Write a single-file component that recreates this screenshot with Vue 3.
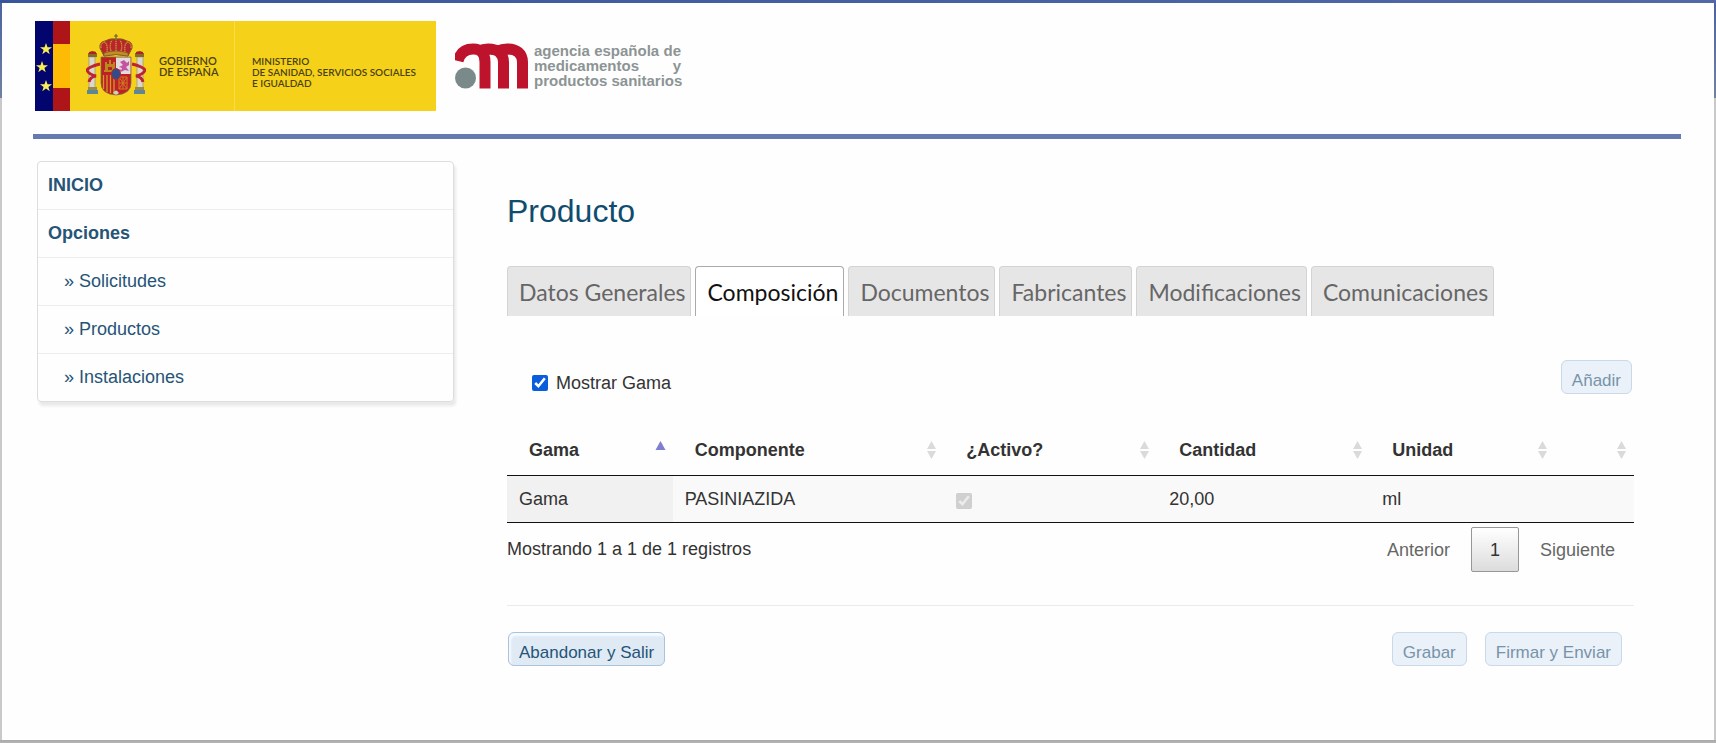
<script setup>
import { ref } from 'vue'

const tabs = ['Datos Generales', 'Composición', 'Documentos', 'Fabricantes', 'Modificaciones', 'Comunicaciones']
const activeTab = ref('Composición')
const showRange = ref(true)
const options = ['Solicitudes', 'Productos', 'Instalaciones']
const columns = [
  { key: 'gama', label: 'Gama', sorted: true },
  { key: 'componente', label: 'Componente' },
  { key: 'activo', label: '¿Activo?' },
  { key: 'cantidad', label: 'Cantidad' },
  { key: 'unidad', label: 'Unidad' },
  { key: 'acciones', label: '' },
]
const rows = [{ gama: 'Gama', componente: 'PASINIAZIDA', activo: true, cantidad: '20,00', unidad: 'ml' }]
</script>

<template>
  <div class="frame">
    <div class="page">
      <header class="header">
        <div class="gov">
          <svg class="flags" width="35" height="90" viewBox="0 0 35 90" aria-hidden="true">
            <rect width="18" height="90" fill="#03056f" />
            <rect x="18" width="17" height="90" fill="#ae1518" />
            <rect x="18" y="23" width="17" height="44" fill="#fdbb05" />
            <defs>
              <path id="star" d="M0-6 1.5-1.8 6-1.8 2.4.9 3.7 5.2 0 2.6-3.7 5.2-2.4.9-6-1.8-1.5-1.8Z" fill="#f8ee55" />
            </defs>
            <use href="#star" x="11" y="28" />
            <use href="#star" x="7" y="46" />
            <use href="#star" x="11" y="65" />
          </svg>
          <svg class="arms" width="60" height="62" viewBox="0 0 60 62" aria-hidden="true">
            <g>
              <path d="M3 23h6v31H3zM51 23h6v31h-6z" fill="#d9d8cf" stroke="#8d8b74" stroke-width=".6" />
              <path d="M2 19h9v4H2zM49 19h9v4h-9z" fill="#8b6a24" />
              <path d="M3 18l3.500-1 3.500 1v2H3zM50 18l3.500-1 3.500 1v2h-7z" fill="#ab2527" />
              <path d="M2 53h9v3H2zM49 53h9v3h-9z" fill="#9a8a49" />
              <path d="M1 56h11v4H1zM48 56h11v4H48z" fill="#5d8697" />
              <path d="M14 30Q9 31 5 33T1 36q1 4 9 6-6 1-7 6M46 30q5 1 9 3t4 3q-1 4-9 6 6 1 7 6" fill="none" stroke="#bd2630" stroke-width="3" />
            </g>
            <path d="M15 23h30v26q0 11-15 12Q15 60 15 49Z" fill="#bd2027" stroke="#80733c" stroke-width=".8" />
            <path d="M30 23.500h14.500V40H30z" fill="#e2dbdf" />
            <path d="M19 36v-8h2v2h2v-4h2v4h2v-2h2v8h-3v-3h-4v3zM18 36h11v2H18z" fill="#b98a1b" />
            <path d="M34 28l4-2 3 3 2-2v4l-3 2 3 4-4-1-4 2 1-4-3-1 4-2zM33 35l3 1-2 2z" fill="#c653a0" />
            <path d="M17.500 41v14M21 41v17M24.500 41v18M28 41v19" stroke="#d39a21" stroke-width="1.300" />
            <path d="M33 43h8v12h-8zM33 43l8 12M41 43l-8 12M37 43v12M33 49h8" fill="none" stroke="#d37a20" stroke-width="1" />
            <path d="M27 59q3-5 6 0l-3 2z" fill="#c9d2c5" />
            <ellipse cx="30" cy="40" rx="4.500" ry="5.500" fill="#344b87" stroke="#ab2b3c" />
            <path d="M18 22 14 14q-1-6 5-7 5-3 11-2 6-1 11 2 6 1 5 7l-4 8q-12-3-24 0Z" fill="#b8262b" stroke="#7d5b1c" />
            <path d="M18 19q12-4 24 0v3q-12-3-24 0Z" fill="#c28c27" stroke="#765a2b" stroke-width=".6" />
            <path d="M15 14q-1-5 4-6 3 3 2 10M45 14q1-5-4-6-3 3-2 10M25 17q-2-6 1-11M35 17q2-6-1-11M30 17V5" fill="none" stroke="#cf9e39" stroke-width="1.200" stroke-dasharray="1.500 .7" />
            <path d="M30 0v6M28 2h4" stroke="#6b6424" stroke-width="1.200" />
          </svg>
          <p class="gov-name">GOBIERNO<br />DE ESPAÑA</p>
          <p class="ministry">MINISTERIO<br />DE SANIDAD, SERVICIOS SOCIALES<br />E IGUALDAD</p>
        </div>
        <div class="agency">
          <svg width="73" height="46" viewBox="0 0 73 46" aria-hidden="true">
            <path d="M3 18Q6 6 18 6q12 0 12 13v26.500M24 8q4-2 9-2 15 0 15.500 13v26.500M43 8q4-2 9-2 15 0 15.500 13v26.500" fill="none" stroke="#be132c" stroke-width="11" />
            <circle cx="10.500" cy="35" r="10.500" fill="#7a8a8a" />
          </svg>
          <div class="agency-name">
            <span>agencia española de</span>
            <span>medicamentos y</span>
            <span>productos sanitarios</span>
          </div>
        </div>
      </header>

      <div class="body">
        <nav class="menu">
          <a href="#" class="strong">INICIO</a>
          <a href="#" class="strong">Opciones</a>
          <a v-for="o in options" :key="o" href="#" class="sub">» {{ o }}</a>
        </nav>

        <main class="main">
          <h1>Producto</h1>
          <div class="tabs" role="tablist">
            <button
              v-for="t in tabs"
              :key="t"
              type="button"
              role="tab"
              class="tab"
              :class="{ active: t === activeTab }"
              :aria-selected="t === activeTab"
              @click="activeTab = t"
            >{{ t }}</button>
          </div>

          <div class="tools">
            <label class="check"><input v-model="showRange" type="checkbox" />Mostrar Gama</label>
            <button type="button" class="btn" disabled>Añadir</button>
          </div>

          <table class="grid">
            <colgroup>
              <col class="c1" /><col class="c2" /><col class="c3" /><col class="c3" /><col class="c5" /><col class="c6" />
            </colgroup>
            <thead>
              <tr>
                <th v-for="c in columns" :key="c.key" scope="col">
                  <div class="th">
                    <span>{{ c.label }}</span>
                    <svg width="11" height="20" viewBox="0 0 11 20" aria-hidden="true">
                      <path v-if="c.sorted" d="M5.500 1 10.500 10H.5Z" fill="#7f7fd0" />
                      <path v-else d="M5.500 1 10 9H1ZM1 11h9l-4.500 8Z" fill="#dadada" />
                    </svg>
                  </div>
                </th>
              </tr>
            </thead>
            <tbody>
              <tr v-for="r in rows" :key="r.componente">
                <td class="sorted">{{ r.gama }}</td>
                <td>{{ r.componente }}</td>
                <td><input type="checkbox" :checked="r.activo" disabled aria-label="¿Activo?" /></td>
                <td>{{ r.cantidad }}</td>
                <td>{{ r.unidad }}</td>
                <td></td>
              </tr>
            </tbody>
          </table>

          <div class="foot">
            <span>Mostrando 1 a 1 de 1 registros</span>
            <div class="pager">
              <button type="button" disabled>Anterior</button>
              <button type="button" class="current">1</button>
              <button type="button" disabled>Siguiente</button>
            </div>
          </div>

          <div class="actions">
            <button type="button" class="btn">Abandonar y Salir</button>
            <div class="right">
              <button type="button" class="btn" disabled>Grabar</button>
              <button type="button" class="btn" disabled>Firmar y Enviar</button>
            </div>
          </div>
        </main>
      </div>
    </div>
  </div>
</template>

<style>
body {
  margin: 0;
}
</style>

<style scoped>
* {
  box-sizing: border-box;
}
.frame {
  display: flex;
  min-height: 100vh;
  padding: 3px 2px;
  background:
    linear-gradient(90deg, #38559c, #5269a6) top / 100% 3px no-repeat,
    linear-gradient(#4a61a3, #71829f) top / 100% 98px no-repeat,
    linear-gradient(#a9a9a9, #b5b5b5) bottom / 100% 3px no-repeat,
    #c9c9c9;
  font: 18px/24px "Liberation Sans", Arial, sans-serif;
  color: #333;
}
.page {
  flex: 1;
  padding: 18px 33px 40px 31px;
  background: #fefefe;
}
.header {
  display: flex;
  gap: 19px;
  padding: 0 2px 23px;
  border-bottom: 5px solid #657bb0;
}
.gov {
  display: flex;
  align-items: center;
  width: 401px;
  height: 90px;
  background: #f6d11a;
  color: #4b4212;
  font: 600 11px/11px Lato, sans-serif;
}
.gov p {
  margin: 0;
}
.arms {
  margin: 0 13px 2px 16px;
}
.gov-name {
  width: 75px;
}
.ministry {
  display: flex;
  align-items: center;
  align-self: stretch;
  padding: 12px 0 0 17px;
  border-left: 1px solid #f9dc4a;
  font-size: 10px;
  white-space: nowrap;
}
.agency {
  display: flex;
  gap: 6px;
  padding-top: 22px;
}
.agency-name {
  display: flex;
  flex-direction: column;
  width: 147px;
  color: #8c9494;
  font: bold 15px/15px "Liberation Sans", Arial, sans-serif;
}
.agency-name span {
  text-align-last: justify;
  white-space: nowrap;
}
.body {
  display: flex;
  align-items: flex-start;
  gap: 53px;
  padding: 22px 47px 0 4px;
}
.menu {
  display: flex;
  flex: none;
  flex-direction: column;
  width: 417px;
  border: 1px solid #ddd;
  border-radius: 4px;
  box-shadow: 2px 4px 3px #e9e9e9;
}
.menu a {
  padding: 11px 10px 12px;
  border-top: 1px solid #ededed;
  color: #265477;
  text-decoration: none;
}
.menu a:first-child {
  border-top: 0;
}
.menu .strong {
  font-weight: bold;
}
.menu .sub {
  padding-left: 26px;
}
.main {
  flex: 1;
  min-width: 0;
}
h1 {
  margin: 0;
  padding: 32px 0 37px;
  color: #0f4c6e;
  font-size: 32px;
  font-weight: normal;
  line-height: 36px;
}
.tabs {
  display: flex;
  gap: 4px;
}
.tab {
  height: 50px;
  padding: 0 5px 0 11px;
  border: 1px solid #d3d3d3;
  border-bottom: 0;
  border-radius: 4px 4px 0 0;
  background: #e6e6e6;
  color: #666;
  font: 23px/30px Lato, Calibri, sans-serif;
  white-space: nowrap;
}
.tab.active {
  border-color: #aaa;
  background: #fff;
  color: #111;
}
.tools {
  display: flex;
  align-items: flex-start;
  justify-content: space-between;
  padding: 44px 2px 30px 25px;
}
.check {
  display: flex;
  align-items: center;
  gap: 8px;
  padding-top: 11px;
}
input[type="checkbox"] {
  width: 16px;
  height: 16px;
  margin: 0;
  accent-color: #0a5ddb;
}
.btn {
  height: 34px;
  padding: 7px 10px 0;
  border: 1px solid #a9c3da;
  border-radius: 6px;
  background: #dfeaf5;
  box-shadow: inset 2px 3px 2px #f5faff;
  color: #265477;
  font: 17px/24px "Liberation Sans", Arial, sans-serif;
}
.btn:disabled {
  border-color: #c9d9e9;
  background: #eaf1f9;
  box-shadow: none;
  color: #7893a9;
}
.grid {
  width: 100%;
  border-bottom: 1px solid #111;
  border-collapse: separate;
  border-spacing: 0;
  table-layout: fixed;
}
.c1 { width: 14.7%; }
.c2 { width: 24.1%; }
.c3 { width: 18.9%; }
.c5 { width: 16.4%; }
.c6 { width: 7%; }
th {
  padding: 13px 7px 13px 22px;
  border-bottom: 1px solid #111;
  text-align: left;
}
.th {
  display: flex;
  align-items: center;
  justify-content: space-between;
}
td {
  height: 46px;
  padding: 0 12px;
  background: #f9f9f9;
}
td input {
  display: block;
  margin-top: 4px !important;
}
td.sorted {
  background: #f1f1f1;
}
.foot {
  display: flex;
  align-items: flex-start;
  justify-content: space-between;
  padding: 4px 0 33px;
}
.foot > span {
  padding-top: 10px;
}
.pager {
  display: flex;
  gap: 2px;
}
.pager button {
  height: 45px;
  padding: 0 18px;
  border: 1px solid transparent;
  border-radius: 2px;
  background: none;
  color: #666;
  font: 18px/24px "Liberation Sans", Arial, sans-serif;
}
.pager .current {
  border-color: #979797;
  background: linear-gradient(#fff, #dcdcdc);
  color: #333;
}
.actions {
  display: flex;
  justify-content: space-between;
  padding: 26px 12px 0 1px;
  border-top: 1px solid #eaeaea;
}
.right {
  display: flex;
  gap: 18px;
}
</style>
